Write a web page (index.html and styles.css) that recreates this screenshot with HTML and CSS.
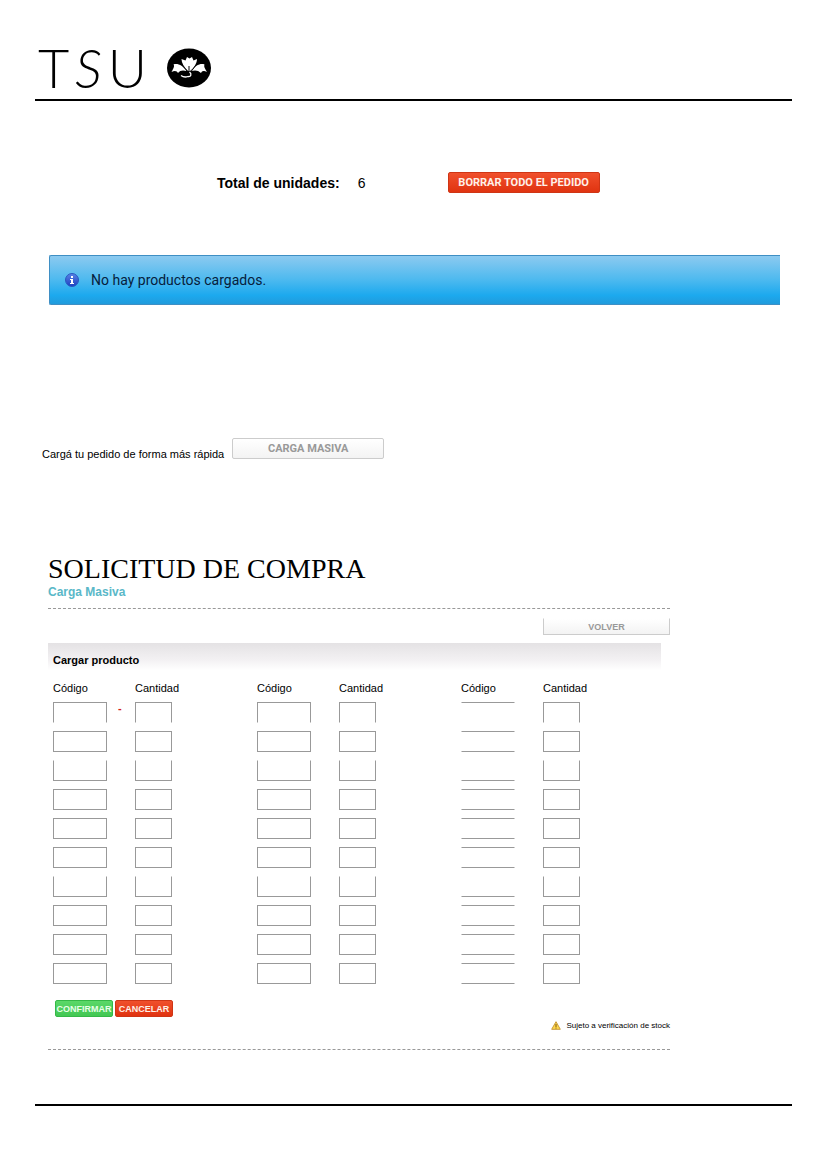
FILE: index.html
```html
<!DOCTYPE html>
<html lang="es">
<head>
<meta charset="utf-8">
<meta name="viewport" content="width=device-width, initial-scale=1">
<title>TSU - Solicitud de compra</title>
<link rel="stylesheet" href="styles.css">
</head>
<body>
<header class="brand">
  <div class="wordmark"><span>T</span><span class="wordmark-s">S</span><span>U</span></div>
  <svg class="lotus" viewBox="0 0 44 40" aria-hidden="true">
    <ellipse cx="22" cy="20" rx="22" ry="19.500" fill="#000"/>
    <g fill="#fff">
      <path d="M21 23C17 19 14.500 15 14.500 11L18.500 12.500L20 9L22.500 10.500L25 9L26.500 12.500L30 11C30 15 27 20 23 23Z"/>
      <path d="M20 23C16 17 10 15 6.500 16.500C8 18 6 21 4.500 24C8 22 10 23 11 25C13 22 16 22 20 23Z"/>
      <path d="M24 23C28 17 34 15 37.500 16.500C36.500 19 38.500 21 40 24C36 22 35 23 34 25C31 22 28 22 24 23Z"/>
    </g>
    <path d="M22 25V18M14 16L20.500 23.500M30 16L24 23.500" fill="none" stroke="#000"/>
    <path d="M22.500 24C25 26 24 29 21 28.500C18 29.500 16 29 14 27.500" fill="none" stroke="#fff" stroke-width="1.300"/>
  </svg>
</header>

<main>
  <section class="summary">
    <strong>Total de unidades:</strong>
    <span class="count">6</span>
    <button class="button danger large" type="button">BORRAR TODO EL PEDIDO</button>
  </section>

  <div class="notice" role="status">
    <svg class="info" viewBox="0 0 14 14" aria-hidden="true">
      <defs><linearGradient id="orb" x2="0" y2="1"><stop stop-color="#5a84e6"/><stop offset="1" stop-color="#1c3fc0"/></linearGradient></defs>
      <circle cx="7" cy="7" r="6.500" fill="url(#orb)" stroke="#2a58c0"/>
      <path d="M6 3h2v2H6zM5 6h3v4h1v1H5v-1h1V7H5z" fill="#fff"/>
    </svg>
    <span>No hay productos cargados.</span>
  </div>

  <section class="quick">
    <span>Cargá tu pedido de forma más rápida</span>
    <button class="button plain wide" type="button">CARGA MASIVA</button>
  </section>

  <section class="order">
    <h1>SOLICITUD DE COMPRA</h1>
    <h2>Carga Masiva</h2>
    <div class="toolbar"><button class="button plain back" type="button">VOLVER</button></div>
    <h3>Cargar producto</h3>
    <form>
      <table>
        <thead>
          <tr>
            <th scope="col" class="code">Código</th><th scope="col" class="amount">Cantidad</th>
            <th scope="col" class="code">Código</th><th scope="col" class="amount">Cantidad</th>
            <th scope="col" class="code">Código</th><th scope="col" class="amount">Cantidad</th>
          </tr>
        </thead>
        <tbody id="rows"></tbody>
      </table>
      <div class="actions">
        <button class="button confirm small" type="button">CONFIRMAR</button>
        <button class="button danger small" type="button">CANCELAR</button>
      </div>
      <p class="stock">
        <svg class="warning" viewBox="0 0 10 9" aria-hidden="true">
          <path d="M5 .700L9.300 8.300H.700Z" fill="#ffd94a" stroke="#c99a3c" stroke-linejoin="round"/>
          <path d="M5 3v3M5 6.500v1" stroke="#7a5310" fill="none"/>
        </svg>
        <span>Sujeto a verificación de stock</span>
      </p>
    </form>
  </section>
</main>
<footer class="end"></footer>
<script src="rows.js"></script>
</body>
</html>
```
FILE: styles.css
```css
* { box-sizing: border-box; }

body {
  margin: 0;
  padding: 48px 35px;
  background: #fff;
  color: #000;
  font-family: "Liberation Sans", Arial, sans-serif;
  font-size: 11px;
}

h1, h2, h3, p { margin: 0; }

.brand {
  display: flex;
  align-items: center;
  gap: 20px;
  height: 53px;
  padding: 0 3px 12px;
  border-bottom: 2px solid #000;
}

.wordmark {
  display: flex;
  justify-content: space-between;
  width: 109px;
  font: 300 54px/40px Lato, sans-serif;
}

.wordmark-s { font-style: italic; }
.lotus { width: 44px; height: 40px; }

.summary {
  display: flex;
  align-items: center;
  margin-top: 71px;
  padding-left: 182px;
  font-size: 14px;
}

.count { width: 90px; margin-left: 18px; }

.button {
  padding: 0;
  border: 1px solid;
  border-radius: 2px;
  font-family: inherit;
  font-weight: bold;
  text-align: center;
  white-space: nowrap;
}

.danger {
  border-color: #cf3515;
  background: linear-gradient(#f0502c, #e03310);
  color: #fff0e8;
}

.confirm {
  border-color: #35b847;
  background: linear-gradient(#5bd868, #42c753);
  color: #e8ffe8;
}

.plain {
  border-color: #ccc;
  background: linear-gradient(#fff, #f3f3f3);
  color: #999;
}

.large,
.wide {
  width: 152px;
  height: 21px;
  font-family: Roboto, sans-serif;
  font-size: 11px;
}

.small { width: 58px; height: 17px; font-size: 9px; }
.back { width: 127px; height: 17px; border-top-color: #fff; border-radius: 0; font-size: 9px; }

.notice {
  display: flex;
  align-items: center;
  gap: 12px;
  height: 50px;
  margin: 62px 12px 0 14px;
  padding-left: 15px;
  border: 1px solid #3f8fc4;
  border-right: 0;
  border-radius: 2px 0 0 2px;
  background: linear-gradient(#8ccaf0, #4cb9ef 50%, #1ca9ee 82%, #209bdc);
  color: #06203c;
  font-family: Roboto, sans-serif;
  font-size: 14px;
}

.info { width: 14px; height: 14px; }

.quick {
  display: flex;
  align-items: flex-end;
  gap: 8px;
  margin-top: 133px;
  padding-left: 7px;
}

.quick span { line-height: 13px; }
.quick .button { margin-bottom: 2px; }

.order {
  max-width: 622px;
  margin: 91px 0 0 13px;
  border-bottom: 1px dashed #999;
}

h1 { font: 28px/33px "Liberation Serif", serif; }

h2 {
  padding-bottom: 8px;
  border-bottom: 1px dashed #999;
  color: #5ab8c8;
  font-size: 12px;
  line-height: 15px;
}

.toolbar {
  display: flex;
  justify-content: flex-end;
  padding: 9px 0 8px;
}

h3 {
  height: 34px;
  margin-right: 9px;
  padding-left: 5px;
  background: linear-gradient(#e4e2e4, #f3f1f3 50%, #fff 80%);
  font-size: 11px;
  line-height: 34px;
}

table {
  margin-left: 5px;
  border-collapse: collapse;
  table-layout: fixed;
  width: 612px;
}

.code { width: 82px; }
.amount { width: 122px; }

th {
  height: 25px;
  padding: 0 0 3px;
  font-weight: normal;
  text-align: left;
}

td {
  height: 29px;
  padding: 0;
  vertical-align: top;
}

input {
  display: inline-block;
  height: 21px;
  padding: 0 3px;
  border: 1px solid #999;
  background: #fff;
  font: inherit;
  vertical-align: top;
}

.code-input { width: 54px; }
.amount-input { width: 37px; }
.open-sides { border-left-color: #fff; border-right-color: #fff; }
.open-bottom input { border-bottom-color: #fff; }
.open-top input { border-top-color: #fff; }
.dash { margin-left: 11px; color: #d32020; font-weight: bold; }

.actions {
  display: flex;
  gap: 2px;
  padding: 8px 0 0 7px;
}

.stock {
  display: flex;
  align-items: center;
  justify-content: flex-end;
  gap: 5px;
  height: 32px;
  padding-bottom: 15px;
  font-size: 8px;
}

.warning { width: 10px; height: 9px; }

.end {
  margin-top: 54px;
  border-top: 2px solid #000;
}
```
FILE: rows.js
```js
const body = document.getElementById("rows");
const rowStyles = { 1: "open-bottom", 3: "open-top", 7: "open-top" };

function field(name, label, className) {
  const input = document.createElement("input");
  input.type = "text";
  input.name = name;
  input.className = className;
  input.setAttribute("aria-label", label);
  return input;
}

for (let row = 1; row <= 10; row++) {
  const tr = body.insertRow();
  tr.className = rowStyles[row] || "";
  for (let group = 1; group <= 3; group++) {
    const item = `${group}-${row}`;
    const code = tr.insertCell();
    code.append(field(`codigo-${item}`, `Código ${item}`, group === 3 ? "code-input open-sides" : "code-input"));
    if (row === 1 && group === 1) {
      const dash = document.createElement("span");
      dash.className = "dash";
      dash.textContent = "-";
      code.append(dash);
    }
    tr.insertCell().append(field(`cantidad-${item}`, `Cantidad ${item}`, "amount-input"));
  }
}
```
